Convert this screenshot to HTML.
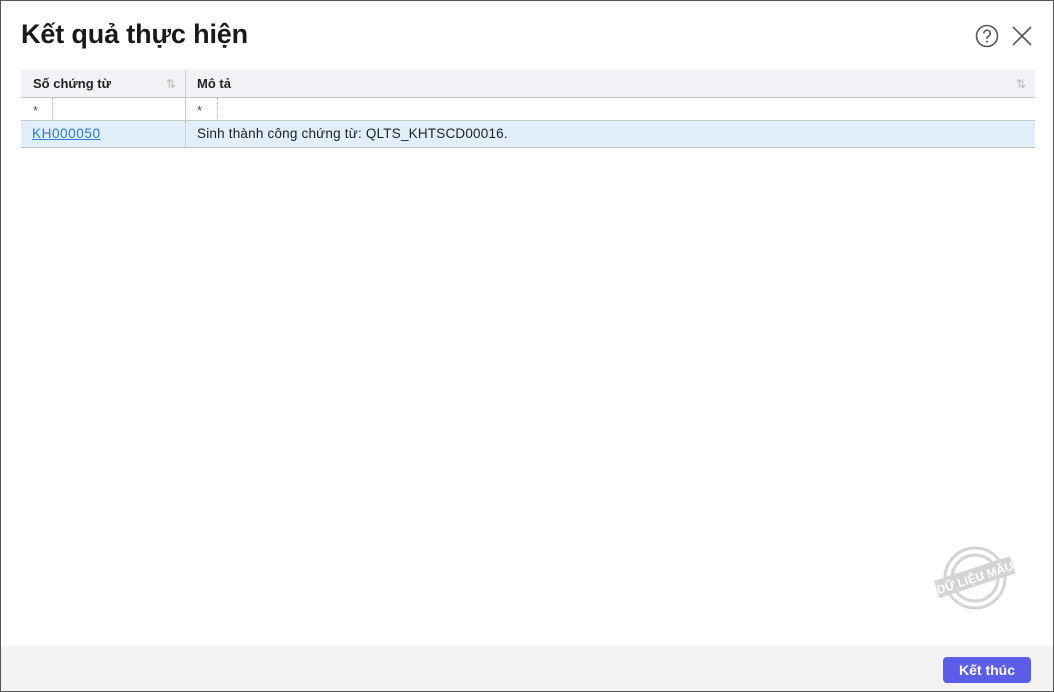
<!DOCTYPE html>
<html><head><meta charset="utf-8"><style>
*{box-sizing:border-box;margin:0;padding:0}
body{width:1054px;height:692px;overflow:hidden;background:#fff;font-family:"Liberation Sans",sans-serif;position:relative}
.frame{position:absolute;left:0;top:0;width:1054px;height:692px;border:1px solid #555}
h1{position:absolute;left:21px;top:19px;font-size:27px;font-weight:bold;color:#1a1a1a;letter-spacing:-0.15px}
.tbl{position:absolute;left:21px;top:70px;width:1014px;font-size:13px;color:#222}
.row{position:absolute;left:0;width:1014px}
.hd{top:0;height:28px;background:#f1f2f6;border-bottom:1px solid #c8c8c8;font-weight:bold}
.fl{top:28px;height:23px;border-bottom:1px solid #c8c8c8}
.dt{top:51px;height:27px;background:#e1effd;border-bottom:1px solid #c8c8c8}
.c{position:absolute;top:0;height:100%;line-height:28px}
.sep{position:absolute;left:164px;top:0;height:100%;border-left:1px solid #ccc}
.dsep{position:absolute;top:0;height:100%;border-left:1px dotted #bbb}
.sort{position:absolute;top:0;font-size:12px;color:#bbb;font-weight:normal;line-height:28px}
.foot{position:absolute;left:1px;top:646px;width:1052px;height:45px;background:#f3f3f3}
.btn{position:absolute;left:943px;top:657px;width:88px;height:26px;background:#5b5de8;border-radius:4px;color:#fff;font-weight:bold;font-size:14px;text-align:center;line-height:26px}
</style></head><body>
<div class="frame"></div>
<h1>Kết quả thực hiện</h1>
<svg style="position:absolute;left:975px;top:24px" width="24" height="24" viewBox="0 0 24 24"><circle cx="12" cy="12" r="10.5" fill="none" stroke="#555" stroke-width="1.6"/><path d="M8.8 9.5a3.2 3.2 0 1 1 4.5 2.9c-.9.4-1.3 1-1.3 2v.6" fill="none" stroke="#555" stroke-width="1.6"/><circle cx="12" cy="17.6" r="1" fill="#555"/></svg>
<svg style="position:absolute;left:1011px;top:25px" width="22" height="22" viewBox="0 0 22 22"><path d="M2 2L20 20M20 2L2 20" stroke="#555" stroke-width="1.6"/></svg>
<div class="tbl">
<div class="row hd"><div class="c" style="left:12px">Số chứng từ</div><div class="sort" style="left:145px">⇅</div><div class="sep"></div><div class="c" style="left:176px">Mô tả</div><div class="sort" style="left:995px">⇅</div></div>
<div class="row fl"><div class="c" style="left:12px;line-height:26px;color:#555">*</div><div class="dsep" style="left:31px"></div><div class="sep"></div><div class="c" style="left:176px;line-height:26px;color:#555">*</div><div class="dsep" style="left:196px"></div></div>
<div class="row dt"><div class="c" style="left:11px;color:#2a7ad6;text-decoration:underline;line-height:26px;font-size:13.5px;letter-spacing:0.6px">KH000050</div><div class="dsep" style="left:164px"></div><div class="c" style="left:176px;line-height:26px;font-size:13.5px;letter-spacing:0.2px">Sinh thành công chứng từ: QLTS_KHTSCD00016.</div></div>
</div>
<svg style="position:absolute;left:932px;top:545px" width="86" height="68" viewBox="0 0 86 68"><g fill="none" stroke="#d4d4d4" stroke-width="3"><circle cx="43" cy="33" r="30"/><circle cx="43" cy="33" r="23"/></g><g transform="rotate(-18 43 33)"><rect x="3" y="23" width="80" height="18" fill="#d4d4d4"/><text x="43" y="37" text-anchor="middle" font-size="12" font-weight="bold" fill="#fff" font-family="Liberation Sans">DỮ LIỆU MẪU</text></g></svg>
<div class="foot"></div>
<div class="btn">Kết thúc</div>
</body></html>
